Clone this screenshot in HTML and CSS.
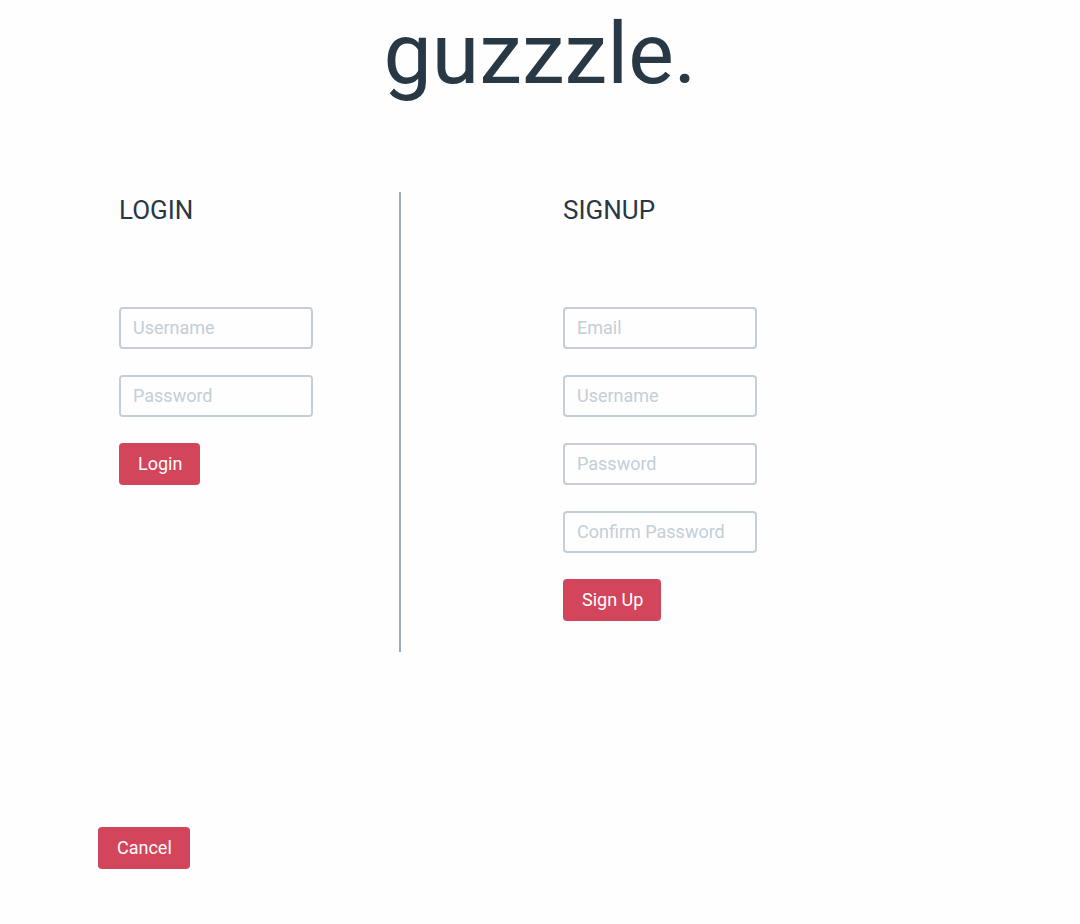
FILE: index.html
```html
<!DOCTYPE html>
<html lang="en">
<head>
<meta charset="utf-8">
<meta name="viewport" content="width=device-width, initial-scale=1">
<title>guzzzle.</title>
<link rel="stylesheet" href="styles.css">
</head>
<body>
<header class="masthead">
  <h1 class="logo">guzzzle.</h1>
</header>
<main class="panels">
  <section class="panel panel-login">
    <h2 class="panel-title">LOGIN</h2>
    <form class="form">
      <input class="field" type="text" placeholder="Username" aria-label="Username">
      <input class="field" type="password" placeholder="Password" aria-label="Password">
      <button class="button" type="submit">Login</button>
    </form>
  </section>
  <section class="panel panel-signup">
    <h2 class="panel-title">SIGNUP</h2>
    <form class="form">
      <input class="field" type="email" placeholder="Email" aria-label="Email">
      <input class="field" type="text" placeholder="Username" aria-label="Username">
      <input class="field" type="password" placeholder="Password" aria-label="Password">
      <input class="field" type="password" placeholder="Confirm Password" aria-label="Confirm Password">
      <button class="button" type="submit">Sign Up</button>
    </form>
  </section>
</main>
<footer class="actions">
  <button class="button" type="button">Cancel</button>
</footer>
</body>
</html>
```
FILE: styles.css
```css
* {
  box-sizing: border-box;
}

body {
  margin: 0;
  background: #fefefe;
  color: #283845;
  font-family: Roboto, "Liberation Sans", sans-serif;
}

.masthead {
  padding-bottom: 84px;
  text-align: center;
}

.logo {
  margin: 0;
  font-size: 86px;
  font-weight: 400;
  line-height: 108px;
}

.panels {
  display: grid;
  grid-template-columns: 401px 1fr;
}

.panel {
  padding-bottom: 31px;
}

.panel-login {
  padding-left: 119px;
  border-right: 2px solid #9badbb;
}

.panel-signup {
  padding-left: 162px;
}

.panel-title {
  margin: 0 0 79px;
  font-size: 26px;
  font-weight: 400;
  line-height: 36px;
}

.form {
  display: flex;
  flex-direction: column;
  align-items: flex-start;
  gap: 26px;
}

.field {
  width: 194px;
  height: 42px;
  padding: 0 12px 2px;
  border: 2px solid #c3ced8;
  border-radius: 4px;
  background: transparent;
  color: inherit;
  font: 18px Roboto, "Liberation Sans", sans-serif;
}

.field::placeholder {
  color: #c3ced8;
  opacity: 1;
}

.button {
  height: 42px;
  padding: 0 18px 2px 19px;
  border: 0;
  border-radius: 4px;
  background: #d3455b;
  color: #fefefe;
  font: 18px Roboto, "Liberation Sans", sans-serif;
}

.actions {
  padding: 175px 98px 55px;
}
```
